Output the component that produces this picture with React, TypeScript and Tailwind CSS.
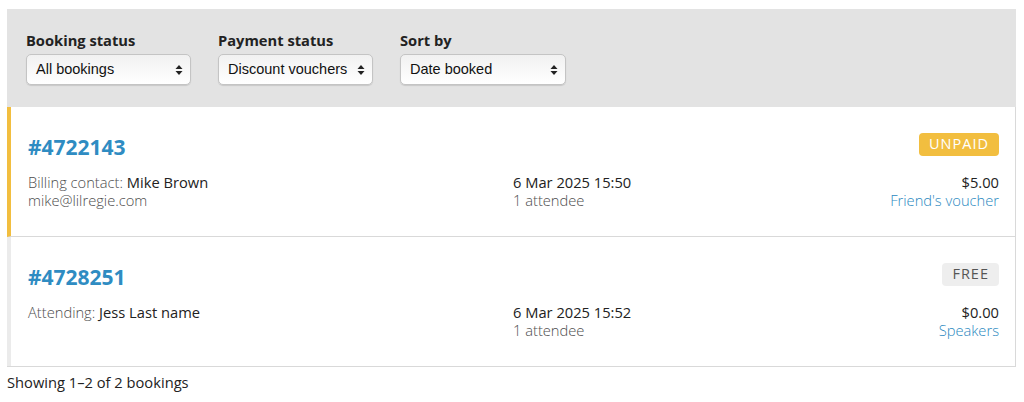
import React from "react";

function UpDown() {
  return (
    <svg width="8" height="12" viewBox="0 0 8 12" className="shrink-0">
      <path d="M4 1 L7.5 5 H0.5 Z" fill="#222" />
      <path d="M4 11 L7.5 7 H0.5 Z" fill="#222" />
    </svg>
  );
}

function FakeSelect({ label, value, width }: { label: string; value: string; width: string }) {
  return (
    <div className="flex flex-col">
      <div className="text-[14.7px] font-bold leading-[20px] text-[#222] mb-[4px]">{label}</div>
      <div
        className={`${width} h-[31px] flex items-center justify-between pl-[9px] pr-[7px] rounded-[5px] border border-[#c4c4c4] bg-gradient-to-b from-[#f1f1f1] to-[#ffffff] shadow-[0_1px_1px_rgba(0,0,0,0.12)]`}
      >
        <span className="text-[14.5px] text-[#111] font-['Liberation_Sans',Arial,sans-serif]">{value}</span>
        <UpDown />
      </div>
    </div>
  );
}

type Booking = {
  id: string;
  label: string;
  name: string;
  email?: string;
  date: string;
  attendees: string;
  badge: string;
  badgeClass: string;
  accent: string;
  price: string;
  voucher: string;
};

const bookings: Booking[] = [
  {
    id: "#4722143",
    label: "Billing contact:",
    name: "Mike Brown",
    email: "mike@lilregie.com",
    date: "6 Mar 2025 15:50",
    attendees: "1 attendee",
    badge: "UNPAID",
    badgeClass: "bg-[#f2be3f] text-white px-[10px]",
    accent: "border-l-[#f2be3f]",
    price: "$5.00",
    voucher: "Friend's voucher",
  },
  {
    id: "#4728251",
    label: "Attending:",
    name: "Jess Last name",
    date: "6 Mar 2025 15:52",
    attendees: "1 attendee",
    badge: "FREE",
    badgeClass: "bg-[#eeeeee] text-[#555] px-[10px]",
    accent: "border-l-[#ebebeb]",
    price: "$0.00",
    voucher: "Speakers",
  },
];

function BookingCard({ b, last }: { b: Booking; last: boolean }) {
  return (
    <div
      className={`border-l-4 ${b.accent} ${last ? "" : "border-b border-b-[#d9d9d9]"} pl-[17px] pr-[16px] pt-[25px] pb-[27px] bg-white`}
    >
      <div className="flex items-center justify-between h-[30px]">
        <div className="text-[21px] font-bold text-[#2f8cc2] leading-[30px]">{b.id}</div>
        <div
          className={`h-[23px] -mt-[6px] flex items-center rounded-[4px] text-[14.5px] tracking-[1px] leading-none ${b.badgeClass}`}
        >
          {b.badge}
        </div>
      </div>
      <div className="grid grid-cols-[485px_1fr_auto] mt-[11px] text-[14.7px] leading-[18px]">
        <div>
          <div className="text-[#4d4d4d] font-light">
            {b.label} <span className="text-[#222] font-normal">{b.name}</span>
          </div>
          {b.email && <div className="text-[#4d4d4d] font-light">{b.email}</div>}
        </div>
        <div>
          <div className="text-[#222]">{b.date}</div>
          <div className="text-[#4d4d4d] font-light">{b.attendees}</div>
        </div>
        <div className="text-right">
          <div className="text-[#222]">{b.price}</div>
          <div className="text-[#2a88c0] font-light">{b.voucher}</div>
        </div>
      </div>
    </div>
  );
}

export default function App() {
  return (
    <div className="w-[1024px] h-[402px] bg-white font-['Open_Sans',sans-serif] pt-[9px] pl-[7px] pr-[8px]">
      <div className="bg-[#e3e3e3] pl-[19px] pt-[21px] pb-[22px] flex gap-[27px]">
        <FakeSelect label="Booking status" value="All bookings" width="w-[165px]" />
        <FakeSelect label="Payment status" value="Discount vouchers" width="w-[155px]" />
        <FakeSelect label="Sort by" value="Date booked" width="w-[166px]" />
      </div>
      <div className="border-r border-b border-[#d9d9d9]">
        {bookings.map((b, i) => (
          <BookingCard key={b.id} b={b} last={i === bookings.length - 1} />
        ))}
      </div>
      <div className="text-[14.7px] text-[#222] mt-[6px] leading-[18px]">Showing 1–2 of 2 bookings</div>
    </div>
  );
}
